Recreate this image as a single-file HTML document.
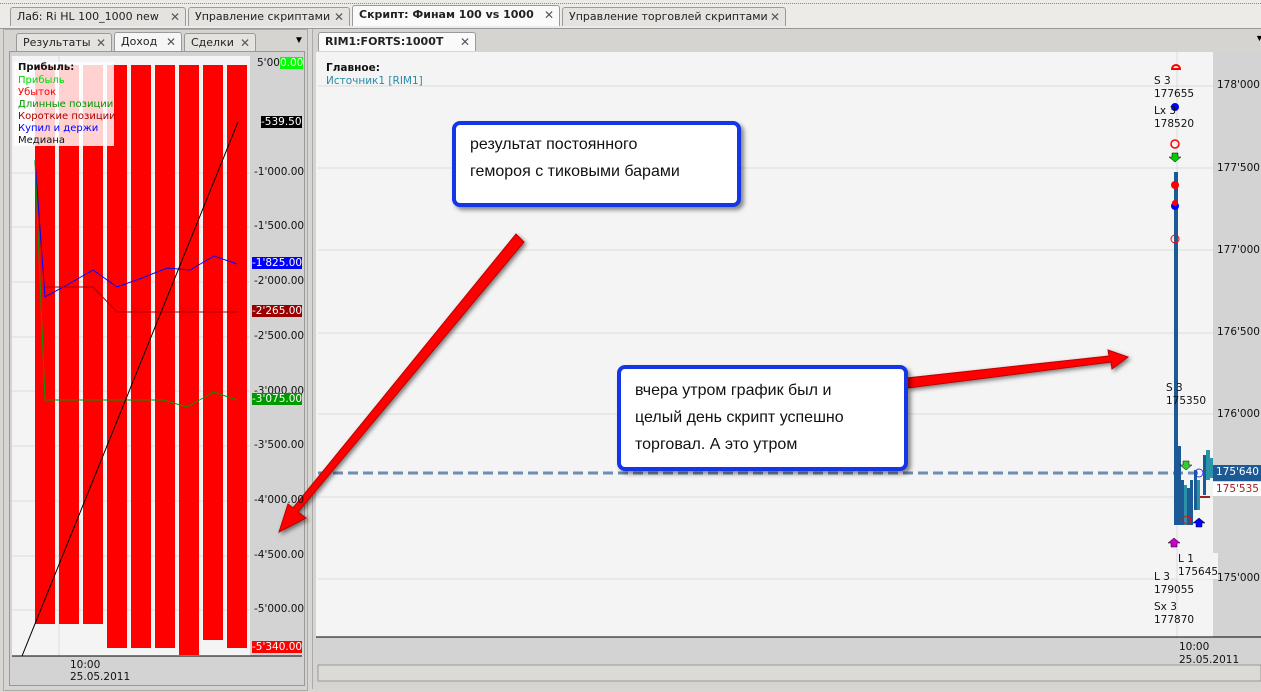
<!DOCTYPE html>
<html><head><meta charset="utf-8"><style>
body{margin:0;width:1261px;height:692px;overflow:hidden;background:#d8d6d2;font-family:"Liberation Sans","DejaVu Sans",sans-serif;position:relative}
.a{position:absolute}
.tab{position:absolute;top:7px;height:19px;border:1px solid #9a9a9a;border-bottom:none;background:#e4e3e0;font:11px "DejaVu Sans",sans-serif;line-height:18px;padding-left:6px;color:#222;border-radius:3px 3px 0 0;box-sizing:border-box;white-space:nowrap;overflow:hidden}
.tab b{font-weight:bold}
.x{position:absolute;right:5px;top:0;color:#555;font-size:12px}
.lab{position:absolute;font:10.5px "DejaVu Sans",sans-serif;color:#111;white-space:nowrap}
.box{position:absolute;background:#fff;border:4px solid #1436e6;border-radius:8px;box-shadow:3px 3px 4px rgba(0,0,0,.45);font:16px "Liberation Sans",sans-serif;color:#111;line-height:27px;padding:6px 14px;box-sizing:border-box}
</style></head><body>
<div class="a" style="left:0;top:0;width:1261px;height:28px;background:#ecebe8;border-bottom:1px solid #999"></div>
<div class="a" style="left:0;top:3px;width:1261px;border-top:1px dotted #888"></div>
<div class="tab" style="left:10px;width:176px">Лаб: Ri HL 100_1000 new<span class="x">✕</span></div>
<div class="tab" style="left:188px;width:162px">Управление скриптами<span class="x">✕</span></div>
<div class="tab" style="left:352px;width:208px;background:#fafafa;height:21px;top:5px"><b>Скрипт: Финам 100 vs 1000</b><span class="x">✕</span></div>
<div class="tab" style="left:562px;width:224px">Управление торговлей скриптами<span class="x">✕</span></div>

<div class="a" style="left:3px;top:29px;width:303px;height:660px;background:#d6d4d0;border:1px solid #aaa"></div>
<div class="tab" style="left:16px;top:33px;width:96px;height:18px">Результаты<span class="x">✕</span></div>
<div class="tab" style="left:114px;top:32px;width:68px;background:#f6f6f6">Доход<span class="x">✕</span></div>
<div class="tab" style="left:184px;top:33px;width:72px;height:18px">Сделки<span class="x">✕</span></div>
<div class="a" style="left:294px;top:35px;font-size:10px">▼</div>
<div class="a" style="left:9px;top:51px;width:294px;height:633px;background:#d3d3d3;border:1px solid #999"></div>

<div class="a" style="left:312px;top:29px;width:949px;height:660px;background:#d6d4d0;border-left:1px solid #aaa"></div>
<div class="tab" style="left:318px;top:32px;width:158px;background:#fafafa"><b>RIM1:FORTS:1000T</b><span class="x">✕</span></div>
<div class="a" style="left:1255px;top:33px;font-size:9px">▼</div>

<svg class="a" style="left:0;top:0" width="1261" height="692">
<rect x="12" y="56" width="290" height="626" fill="#d3d3d3"/>
<rect x="12" y="56" width="238" height="600" fill="#f4f4f4"/>
<g stroke="#dcdcdc" stroke-width="1">
<line x1="12" y1="173" x2="250" y2="173"/><line x1="12" y1="227" x2="250" y2="227"/><line x1="12" y1="282" x2="250" y2="282"/><line x1="12" y1="337" x2="250" y2="337"/><line x1="12" y1="391" x2="250" y2="391"/><line x1="12" y1="446" x2="250" y2="446"/><line x1="12" y1="501" x2="250" y2="501"/><line x1="12" y1="556" x2="250" y2="556"/><line x1="12" y1="610" x2="250" y2="610"/><line x1="59" y1="56" x2="59" y2="656"/>
</g>
<g fill="#ff0000">
<rect x="35" y="65" width="20" height="559"/><rect x="59" y="65" width="20" height="559"/><rect x="83" y="65" width="20" height="559"/><rect x="107" y="65" width="20" height="583"/><rect x="131" y="65" width="20" height="583"/><rect x="155" y="65" width="20" height="583"/><rect x="179" y="65" width="20" height="590"/><rect x="203" y="65" width="20" height="575"/><rect x="227" y="65" width="20" height="583"/>
</g>
<rect x="14" y="62" width="100" height="84" fill="#fff" fill-opacity=".82"/>
<polyline fill="none" stroke="#0000ff" points="35,160 45,297 67,285 93,270 117,287 142,278 167,268 190,270 214,256 237,264"/>
<polyline fill="none" stroke="#aa0000" points="45,287 93,287 117,312 237,312"/>
<polyline fill="none" stroke="#009900" points="35,160 45,400 163,400 187,407 214,392 237,400"/>
<line x1="22" y1="656" x2="238" y2="122" stroke="#000"/>
<line x1="12" y1="656" x2="302" y2="656" stroke="#000"/>
<rect x="316" y="52" width="945" height="585" fill="#f4f4f4"/>
<rect x="1213" y="52" width="48" height="585" fill="#d3d3d3"/>
<g stroke="#dcdcdc">
<line x1="318" y1="86" x2="1213" y2="86"/><line x1="318" y1="168" x2="1213" y2="168"/><line x1="318" y1="250" x2="1213" y2="250"/><line x1="318" y1="333" x2="1213" y2="333"/><line x1="318" y1="414" x2="1213" y2="414"/><line x1="318" y1="497" x2="1213" y2="497"/><line x1="318" y1="579" x2="1213" y2="579"/><line x1="1177" y1="52" x2="1177" y2="637"/>
</g>
<line x1="318" y1="473" x2="1213" y2="473" stroke="#6d8db3" stroke-width="3" stroke-dasharray="10,5"/>
<line x1="316" y1="637" x2="1261" y2="637" stroke="#000"/>
<rect x="316" y="638" width="945" height="25" fill="#d3d3d3"/>
<rect x="318" y="665" width="943" height="16" fill="#dcdad6" stroke="#999"/>
<rect x="1174" y="172" width="4" height="353" fill="#1c5a96"/>
<g fill="#1c5a96"><rect x="1177" y="446" width="4" height="79"/><rect x="1181" y="480" width="3" height="45"/><rect x="1186" y="488" width="4" height="37"/><rect x="1190" y="480" width="3" height="45"/><rect x="1194" y="470" width="3" height="40"/><rect x="1203" y="455" width="3" height="40"/></g>
<g fill="#2b93a8"><rect x="1184" y="485" width="3" height="40"/><rect x="1197" y="480" width="3" height="30"/><rect x="1206" y="450" width="4" height="30"/><rect x="1210" y="458" width="3" height="20"/></g>
<rect x="1213" y="465" width="48" height="16" fill="#1c5a96"/>
<rect x="1213" y="482" width="48" height="14" fill="#fff"/>
<line x1="1200" y1="497" x2="1210" y2="497" stroke="#a02020" stroke-width="2"/>
<path d="M1172,69 a4,4 0 0 1 8,0z" fill="none" stroke="#f00" stroke-width="2"/>
<circle cx="1175" cy="107" r="4" fill="#00f"/>
<circle cx="1175" cy="144" r="4" fill="none" stroke="#f00" stroke-width="1.5"/>
<circle cx="1175" cy="185" r="4" fill="#f00"/><circle cx="1175" cy="206" r="4" fill="#00f"/><circle cx="1175" cy="203" r="3" fill="#f00"/>
<circle cx="1175" cy="239" r="4" fill="none" stroke="#f00"/>
<path d="M1172,153h6v4h3l-6,5l-6,-5h3z" fill="#0c0" stroke="#000" stroke-width=".5"/>
<path d="M1183,461h6v4h3l-6,5l-6,-5h3z" fill="#3c3" stroke="#000" stroke-width=".5"/>
<path d="M1196,527h6v-4h3l-6,-5l-6,5h3z" fill="#00f" stroke="#000" stroke-width=".5"/>
<path d="M1171,547h6v-4h3l-6,-5l-6,5h3z" fill="#c0c" stroke="#000" stroke-width=".5"/>
<circle cx="1187" cy="520" r="4" fill="none" stroke="#f00"/><circle cx="1199" cy="473" r="4" fill="none" stroke="#33f"/>
<g fill="#ff0000" stroke="#b00" stroke-width="1" filter="drop-shadow(2px 2px 2px rgba(0,0,0,.5))">
<path d="M516,234 L524,242 L298,512 L306,518 L279,532 L288,504 L293,508 Z"/>
<path d="M907,378 L908,388 L1111,362 L1112,369 L1128,357 L1108,350 L1109,356 Z"/>
</g>
</svg>

<div class="lab" style="left:18px;top:62px;font-weight:bold;font-size:10px">Прибыль:</div>
<div class="lab" style="left:18px;top:75px;color:#00d800;font-size:10px">Прибыль</div>
<div class="lab" style="left:18px;top:87px;color:#f00;font-size:10px">Убыток</div>
<div class="lab" style="left:18px;top:99px;color:#009900;font-size:10px">Длинные позиции</div>
<div class="lab" style="left:18px;top:111px;color:#aa0000;font-size:10px">Короткие позиции</div>
<div class="lab" style="left:18px;top:123px;color:#00f;font-size:10px">Купил и держи</div>
<div class="lab" style="left:18px;top:135px;font-size:10px">Медиана</div>

<div class="lab" style="left:257px;top:57px">5'00<span style="background:#0f0;color:#fff">0.00</span></div>
<div class="lab" style="left:261px;top:116px;background:#000;color:#fff">-539.50</div>
<div class="lab" style="left:254px;top:166px">-1'000.00</div>
<div class="lab" style="left:254px;top:220px">-1'500.00</div>
<div class="lab" style="left:252px;top:257px;background:#00f;color:#fff">-1'825.00</div>
<div class="lab" style="left:254px;top:275px">-2'000.00</div>
<div class="lab" style="left:252px;top:305px;background:#990000;color:#fff">-2'265.00</div>
<div class="lab" style="left:254px;top:330px">-2'500.00</div>
<div class="lab" style="left:254px;top:385px">-3'000.00</div>
<div class="lab" style="left:252px;top:393px;background:#009900;color:#fff">-3'075.00</div>
<div class="lab" style="left:254px;top:439px">-3'500.00</div>
<div class="lab" style="left:254px;top:494px">-4'000.00</div>
<div class="lab" style="left:254px;top:549px">-4'500.00</div>
<div class="lab" style="left:254px;top:603px">-5'000.00</div>
<div class="lab" style="left:252px;top:641px;background:#f00;color:#fff">-5'340.00</div>
<div class="lab" style="left:70px;top:659px">10:00</div>
<div class="lab" style="left:70px;top:671px">25.05.2011</div>

<div class="lab" style="left:326px;top:62px;font-weight:bold">Главное:</div>
<div class="lab" style="left:326px;top:75px;color:#2a8aa8">Источник1 [RIM1]</div>
<div class="lab" style="left:1154px;top:75px;line-height:13px">S 3<br>177655</div>
<div class="lab" style="left:1154px;top:105px;line-height:13px">Lx 3<br>178520</div>
<div class="lab" style="left:1166px;top:382px;line-height:13px">S 3<br>175350</div>
<div class="lab" style="left:1178px;top:553px;line-height:13px;background:#f4f4f4">L 1<br>175645</div>
<div class="lab" style="left:1154px;top:571px;line-height:13px">L 3<br>179055</div>
<div class="lab" style="left:1154px;top:601px;line-height:13px">Sx 3<br>177870</div>
<div class="lab" style="left:1217px;top:79px">178'000</div>
<div class="lab" style="left:1217px;top:162px">177'500</div>
<div class="lab" style="left:1217px;top:244px">177'000</div>
<div class="lab" style="left:1217px;top:326px">176'500</div>
<div class="lab" style="left:1217px;top:408px">176'000</div>
<div class="lab" style="left:1216px;top:466px;color:#fff">175'640</div>
<div class="lab" style="left:1216px;top:483px;color:#a02020">175'535</div>
<div class="lab" style="left:1217px;top:572px">175'000</div>
<div class="lab" style="left:1179px;top:641px">10:00</div>
<div class="lab" style="left:1179px;top:654px">25.05.2011</div>

<div class="box" style="left:452px;top:121px;width:289px;height:86px">результат постоянного<br>гемороя с тиковыми барами</div>
<div class="box" style="left:617px;top:365px;width:291px;height:106px;padding-top:8px">вчера утром график был и<br>целый день скрипт успешно<br>торговал. А это утром</div>
</body></html>
